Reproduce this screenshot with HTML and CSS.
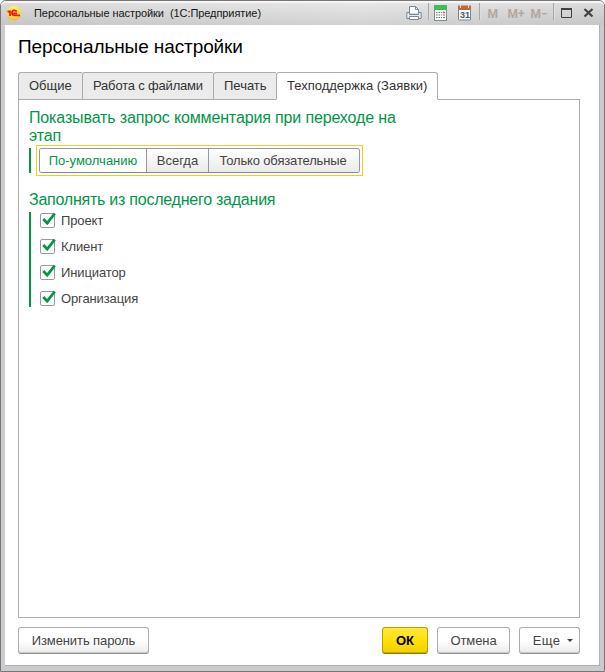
FILE: index.html
```html
<!DOCTYPE html>
<html lang="ru">
<head>
<meta charset="utf-8">
<title>Персональные настройки</title>
<link rel="stylesheet" href="styles.css">
</head>
<body>
<div class="window">
  <header class="titlebar">
    <svg class="logo" width="16" height="16" viewBox="0 0 16 16">
      <defs><radialGradient id="gold" cx=".45" cy=".3" r=".7"><stop offset="0" stop-color="#fff58a"/><stop offset=".65" stop-color="#fce051"/><stop offset="1" stop-color="#e6b83c"/></radialGradient></defs>
      <circle cx="8" cy="8" r="7.5" fill="url(#gold)"/>
      <path d="M1.500 6.500H4V11M10.500 6.700C10 4.800 6 4.800 6 7.800C6 9.500 7.300 10.300 8.500 10.300H14M8.300 7.500V8.300H11" fill="none" stroke="#f01808" stroke-width="1.800"/>
    </svg>
    <div class="caption">Персональные настройки&nbsp; (1С:Предприятие)</div>
    <svg class="tools" width="200" height="24" viewBox="400 0 200 24">
      <g fill="#f8fafc" stroke="#7b8894">
        <path d="M409.500 13V6.500H415.500L418.500 9.500V13"/>
        <path d="M415.500 6.500V9.500H418.500" fill="none"/>
        <path d="M406.800 12.500H409.500V14.500H418.500V12.500H421.200V18.500H406.800Z" fill="#e6eaee"/>
        <path d="M409.500 16.500H418.500V19.500H409.500Z"/>
      </g>
      <path d="M428.500 3V20M479.500 3V20M553.500 3V20" stroke="#a8a8a8"/>
      <path d="M429.500 3V20M480.500 3V20M554.500 3V20" stroke="#dedede"/>
      <rect x="434.500" y="5.500" width="12" height="15" fill="#f5faf8" stroke="#7f918d"/>
      <rect x="434" y="5" width="13" height="5" rx="1" fill="#3ebf55"/>
      <g stroke="#66806f" stroke-width="1.200" stroke-dasharray="1.500 1">
        <path d="M436 12.500H442M436 15H442M436 17.500H442"/>
      </g>
      <path d="M443 12.500H445" stroke="#e24b3d" stroke-width="1.500"/><path d="M443 15H445M443 17.500H445" stroke="#66806f"/>
      <rect x="458.500" y="6.500" width="12" height="13.500" rx=".5" fill="#f8fafb" stroke="#788894"/>
      <path d="M458 5.500H471V10H458Z" fill="#bd6a3c"/>
      <path d="M460.500 5V8M468.500 5V8" stroke="#f1dfd3"/>
      <text x="460" y="18" class="day">31</text>
      <g class="memory"><text x="487.500" y="17.500">M</text><text x="507.500" y="17.500">M+</text><text x="530.500" y="17.500">M−</text></g>
      <path d="M561.500 8.500H571.500V17.500H561.500Z" fill="none" stroke="#414141"/>
      <path d="M561 9H572" stroke="#414141" stroke-width="2"/>
      <path d="M584.500 9L592.500 16.500M592.500 9L584.500 16.500" stroke="#414141" stroke-width="2.200"/>
    </svg>
  </header>
  <main class="content">
    <h1>Персональные настройки</h1>
    <nav class="tabs">
      <div class="tab general">Общие</div><div class="tab files">Работа с файлами</div><div class="tab print">Печать</div><div class="tab support active">Техподдержка (Заявки)</div>
    </nav>
    <section class="panel">
      <h2 class="question">Показывать запрос комментария при переходе на<br>этап</h2>
      <div class="group choice">
        <div class="focus"><div class="segments">
          <button class="default selected">По-умолчанию</button><button class="always">Всегда</button><button class="required">Только обязательные</button>
        </div></div>
      </div>
      <h2 class="fill">Заполнять из последнего задания</h2>
      <div class="group checks">
        <div class="check"><svg width="18" height="17" viewBox="0 0 18 17"><rect x=".5" y="1.500" width="14" height="14" rx="1.500"/><path d="M3.300 7L7.200 11.200L14.800 1.500"/></svg><span>Проект</span></div>
        <div class="check"><svg width="18" height="17" viewBox="0 0 18 17"><rect x=".5" y="1.500" width="14" height="14" rx="1.500"/><path d="M3.300 7L7.200 11.200L14.800 1.500"/></svg><span>Клиент</span></div>
        <div class="check"><svg width="18" height="17" viewBox="0 0 18 17"><rect x=".5" y="1.500" width="14" height="14" rx="1.500"/><path d="M3.300 7L7.200 11.200L14.800 1.500"/></svg><span>Инициатор</span></div>
        <div class="check"><svg width="18" height="17" viewBox="0 0 18 17"><rect x=".5" y="1.500" width="14" height="14" rx="1.500"/><path d="M3.300 7L7.200 11.200L14.800 1.500"/></svg><span>Организация</span></div>
      </div>
    </section>
    <footer>
      <button class="btn password">Изменить пароль</button>
      <button class="btn ok">ОК</button>
      <button class="btn cancel">Отмена</button>
      <button class="btn more">Еще<i></i></button>
    </footer>
  </main>
</div>
</body>
</html>
```
FILE: styles.css
```css
* { box-sizing: border-box; }
body { margin: 0; background: #fff; font: 13px/16px "Liberation Sans", Arial, sans-serif; color: #444; }
.window { width: 605px; height: 672px; padding: 0 4px 5px 4px; border: 1px solid #777577; border-radius: 6px 6px 0 0; background: #cbcacc; }
.titlebar { display: flex; align-items: center; height: 24px; margin: 0 -4px; padding-left: 5px; border-radius: 5px 5px 0 0; border-top: 2px solid #f6f6f6; background: linear-gradient(100deg, #d0d0d066, #eeeeee66 60%, #d0d0d066), linear-gradient(#e2e2e2, #bfbfc1); }
.logo { flex: none; margin-top: -2px; }
.caption { width: 378px; flex: none; margin-top: -3px; padding-left: 12px; font-size: 11px; letter-spacing: -.07px; color: #161616; white-space: nowrap; }
.tools { flex: none; margin-top: -4px; }
.day { font: bold 9px "Liberation Sans"; fill: #4b5966; }
.memory { font: bold 12px Roboto, sans-serif; fill: #b5a79f; }
.content { height: 641px; padding: 11px 19px 0 13px; background: #fff; border: solid #afb0b2; border-width: 0 1px 1px 0; }
h1 { margin: 0 0 25px; font-size: 19px; letter-spacing: -.1px; line-height: 21px; font-weight: 400; color: #000; }
.tabs { display: flex; height: 28px; position: relative; margin-bottom: -1px; margin-top: -10px; }
.tab { border: 1px solid #acacac; border-right-width: 0; background: #ebebeb; color: #333; line-height: 26px; padding-left: 10px; white-space: nowrap; border-radius: 3px 0 0; }
.general { width: 64px; }
.files { width: 131px; letter-spacing: -.18px; }
.print { width: 63px; }
.support { width: 162px; }
.active { background: #fff; border-right-width: 1px; border-bottom-color: #fff; border-radius: 3px 3px 0 0; }
.panel { height: 519px; border: 1px solid #acacac; padding: 9px 10px; }
h2 { margin: 0; font-size: 16px; line-height: 18px; font-weight: 400; color: #009646; white-space: nowrap; }
.question { letter-spacing: -.14px; }
.group { border-left: 2px solid #009646; }
.choice { height: 25px; margin-top: 3px; padding-left: 5px; }
.focus { width: 327px; height: 31px; padding: 2px; border: 1px solid #fcca1c; position: relative; top: -3px; }
.segments { display: flex; width: 321px; height: 25px; border: 1px solid #999; border-bottom-color: #888; border-radius: 3px; overflow: hidden; }
.segments button { padding: 0; border: 0; border-right: 1px solid #999; background: linear-gradient(#fff, #eaeaea); color: #444; font: inherit; }
.segments .default { width: 107px; }
.segments .always { width: 62px; }
.segments .required { width: 150px; padding-right: 2px; border: 0; letter-spacing: -.15px; }
.segments .selected { background: #fff; color: #009646; }
.fill { margin-top: 18px; letter-spacing: -.24px; }
.checks { display: flex; flex-direction: column; height: 95px; margin-top: 3px; padding-left: 9px; }
.check { display: flex; flex: none; align-items: center; height: 26px; color: #444; letter-spacing: -.12px; }
.check:first-child { margin-top: -4px; }
.check svg { margin: -2px 3px 0 0; }
.check rect { fill: #fff; stroke: #999; }
.check path { fill: none; stroke: #009646; stroke-width: 2.8; }
footer { display: flex; margin-top: 9px; }
.btn { display: flex; align-items: center; justify-content: center; height: 27px; padding: 0; border: 1px solid #adadad; border-bottom-color: #929292; border-radius: 3px; background: linear-gradient(#fff 50%, #ebebeb); box-shadow: inset 0 -1px #c9c9c9; color: #444; font: inherit; }
.password { width: 131px; margin-right: auto; letter-spacing: -.1px; }
.ok { width: 46px; border-color: #b8a000; border-bottom-color: #8f7c00; background: linear-gradient(#ffe940, #ffdf00 55%, #f1cf00); box-shadow: inset 0 -1px #c6aa00; color: #000; font-weight: 700; font-size: 13px; }
.cancel { width: 73px; margin-left: 9px; letter-spacing: -.1px; }
.more { width: 61px; margin-left: 9px; padding-left: 7px; letter-spacing: .4px; }
.more i { margin-left: 7px; border: 3px solid transparent; border-top-color: #444; border-bottom: 0; }
```
